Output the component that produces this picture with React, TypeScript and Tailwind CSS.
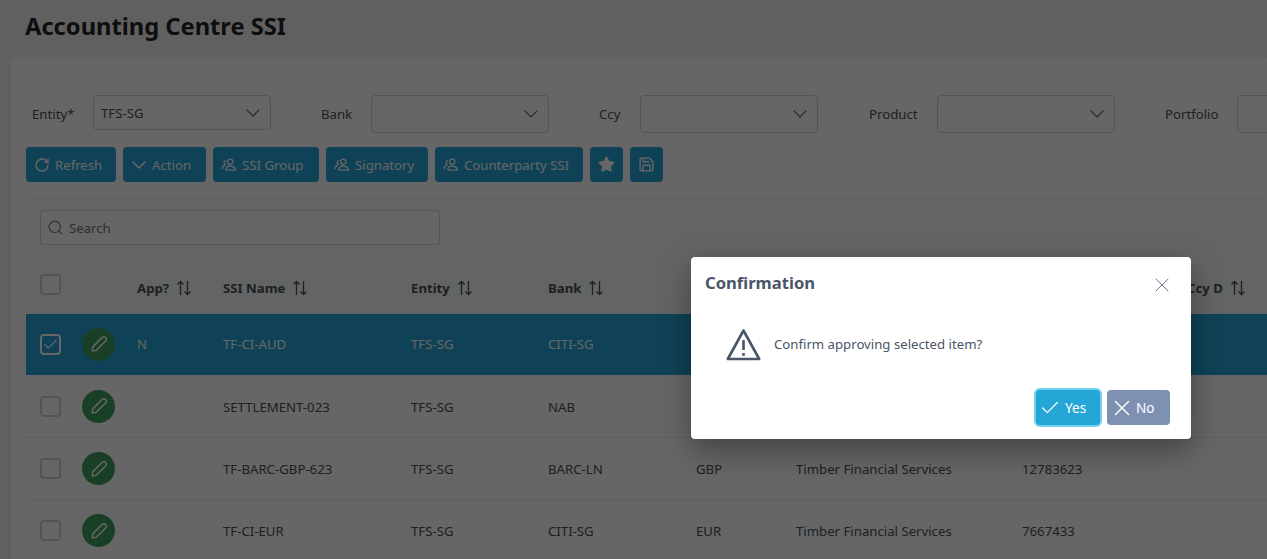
import { Check, ChevronDown, RotateCw, Save, Search, Star, X } from 'lucide-react'

const grid = 'grid grid-cols-[56px_55px_86px_188px_137px_148px_100px_226px_165px_1fr] items-center'

const rows = [
  { app: 'N', name: 'TF-CI-AUD', bank: 'CITI-SG', ccy: 'AUD', account: '8823410', selected: true, height: 'h-[61px]' },
  { app: '', name: 'SETTLEMENT-023', bank: 'NAB', ccy: 'AUD', account: '5510023', selected: false, height: 'h-[63px]' },
  { app: '', name: 'TF-BARC-GBP-623', bank: 'BARC-LN', ccy: 'GBP', account: '12783623', selected: false, height: 'h-[62px]' },
  { app: '', name: 'TF-CI-EUR', bank: 'CITI-SG', ccy: 'EUR', account: '7667433', selected: false, height: 'h-[62px]' },
]

function SortIcon() {
  return (
    <svg width="16" height="16" viewBox="0 0 16 16" fill="none" stroke="currentColor" strokeWidth="1.3" className="ml-[7px] shrink-0">
      <path d="M4.5 15V1.5M1.5 4.5l3-3 3 3" />
      <path d="M11.5 1v13.5M8.5 11.5l3 3 3-3" />
    </svg>
  )
}

function UsersIcon() {
  return (
    <svg width="16" height="14" viewBox="0 0 16 14" fill="none" stroke="currentColor" strokeWidth="1.3">
      <circle cx="9.2" cy="3.8" r="2.6" />
      <path d="M4.8 12c0-2.6 2-4 4.4-4s4.2 1.2 5.4 3.4c.2.5 0 .8-.4.8H5.2" />
      <path d="M5 6.6A2 2 0 0 1 5.2 2.6" />
      <path d="M1 11.2c0-2 1-3.4 2.8-3.8" />
    </svg>
  )
}

function PencilIcon() {
  return (
    <svg width="18" height="18" viewBox="0 0 16 16" fill="none" stroke="currentColor" strokeWidth="1.3" strokeLinejoin="round">
      <path d="M10.9 2a2.3 2.3 0 0 1 3.2 3.2L6 13.2a1.5 1.5 0 0 1-.9.5L2 14.1l.4-3.1a1.5 1.5 0 0 1 .5-.9z" />
    </svg>
  )
}

function Select({ value }: { value?: string }) {
  return (
    <div className={`w-[178px] flex items-center justify-between pl-[7px] pr-[5px] bg-white border border-[#ced4da] rounded-[4px] text-[13.2px] text-[#495057] shrink-0 ${value ? 'h-[35px]' : 'h-[38px]'}`}>
      <span>{value}</span>
      <ChevronDown size={24} strokeWidth={1.25} className="text-[#6c757d]" />
    </div>
  )
}

function ToolButton({ icon, label, width }: { icon: React.ReactNode; label?: string; width: string }) {
  return (
    <button className={`${width} h-[35px] flex items-center gap-[5px] bg-[#26a6d6] text-white text-[13.2px] rounded-[4px] shrink-0 ${label ? 'pl-[8px]' : 'justify-center'}`}>
      {icon}
      {label && <span className="pt-[2px]">{label}</span>}
    </button>
  )
}

export default function App() {
  return (
    <div className="relative w-[1267px] h-[559px] overflow-hidden bg-[#f0f1f1] font-['Noto_Sans','Open_Sans',sans-serif]">
      <h1 className="h-[57px] pl-[25px] pt-[8px] text-[23.7px] leading-[36px] font-bold text-[#212529]">Accounting Centre SSI</h1>

      <div className="ml-[11px] h-[502px] bg-white rounded-t-[4px] pl-[15px] pt-[38px]">
        {/* Filters */}
        <div className="flex items-start h-[38px] text-[13.2px] leading-[38px] text-[#495057] whitespace-nowrap">
          <label className="w-[67px] pl-[6px] shrink-0">Entity*</label>
          <Select value="TFS-SG" />
          <label className="w-[100px] pl-[50px] shrink-0">Bank</label>
          <Select />
          <label className="w-[91px] pl-[50px] shrink-0">Ccy</label>
          <Select />
          <label className="w-[119px] pl-[51px] shrink-0">Product</label>
          <Select />
          <label className="w-[122px] pl-[50px] shrink-0">Portfolio</label>
          <Select />
        </div>

        {/* Toolbar */}
        <div className="flex gap-[7px] mt-[14px]">
          <ToolButton width="w-[90px]" label="Refresh" icon={<RotateCw size={16} strokeWidth={2} />} />
          <ToolButton width="w-[83px]" label="Action" icon={<ChevronDown size={24} strokeWidth={1.6} className="-mx-[4px]" />} />
          <ToolButton width="w-[106px]" label="SSI Group" icon={<UsersIcon />} />
          <ToolButton width="w-[102px]" label="Signatory" icon={<UsersIcon />} />
          <ToolButton width="w-[148px]" label="Counterparty SSI" icon={<UsersIcon />} />
          <ToolButton width="w-[33px]" icon={<Star size={17} fill="currentColor" />} />
          <ToolButton width="w-[33px]" icon={<Save size={17} strokeWidth={2} />} />
        </div>

        {/* Table */}
        <div className="mt-[14px] bg-[#f8f9fa] rounded-t-[4px]">
          <div className="pt-[14px] pl-[14px]">
            <div className="w-[400px] h-[35px] flex items-center gap-[5px] pl-[6px] bg-white border border-[#ced4da] rounded-[4px] text-[13.2px] text-[#6c757d]">
              <Search size={17} strokeWidth={1.5} />
              <span className="pt-[2px]">Search</span>
            </div>
          </div>

          <div className={`${grid} h-[52px] mt-[17px] text-[13.2px] font-bold text-[#495057] whitespace-nowrap`}>
            <div className="pl-[14px] pb-[7px]">
              <div className="w-[21px] h-[21px] bg-white border-2 border-[#ced4da] rounded-[4px]" />
            </div>
            <div />
            <div className="flex items-center pt-px">App?<SortIcon /></div>
            <div className="flex items-center pt-px">SSI Name<SortIcon /></div>
            <div className="flex items-center pt-px">Entity<SortIcon /></div>
            <div className="flex items-center pt-px">Bank<SortIcon /></div>
            <div className="flex items-center pt-px">Ccy<SortIcon /></div>
            <div className="flex items-center pt-px">Counterparty<SortIcon /></div>
            <div className="flex items-center pt-px">Account<SortIcon /></div>
            <div className="flex items-center pt-px">Ccy D<SortIcon /></div>
          </div>
        </div>

        {rows.map((row) => {
          const cell = row.selected ? 'pt-px' : 'pt-[3px]'
          return (
            <div
              key={row.name}
              className={`${grid} ${row.height} border-b text-[13.2px] whitespace-nowrap ${
                row.selected ? 'bg-[#26a6d6] text-white border-[#26a6d6]' : 'bg-white text-[#495057] border-[#e9ecef]'
              }`}
            >
              <div className="pl-[14px]">
                {row.selected ? (
                  <div className="w-[21px] h-[21px] flex items-center justify-center border-2 border-white rounded-[4px]">
                    <Check size={17} strokeWidth={1.6} />
                  </div>
                ) : (
                  <div className="w-[21px] h-[21px] bg-white border-2 border-[#ced4da] rounded-[4px]" />
                )}
              </div>
              <div>
                <div className="w-[33px] h-[33px] rounded-full bg-[#3f9f62] text-white flex items-center justify-center">
                  <PencilIcon />
                </div>
              </div>
              <div className={cell}>{row.app}</div>
              <div className={cell}>{row.name}</div>
              <div className={cell}>TFS-SG</div>
              <div className={cell}>{row.bank}</div>
              <div className={cell}>{row.ccy}</div>
              <div className={cell}>Timber Financial Services</div>
              <div className={cell}>{row.account}</div>
              <div />
            </div>
          )
        })}
      </div>

      {/* Dialog mask */}
      <div className="absolute inset-0 bg-black/60" />

      <div className="absolute left-[691px] top-[257px] w-[500px] h-[182px] bg-white rounded-[4px] shadow-[0_11px_30px_rgba(0,0,0,0.35)] flex flex-col">
        <div className="flex items-center justify-between h-[53px] pl-[14px] pr-[17px]">
          <span className="text-[16.6px] font-bold text-[#4a5568]">Confirmation</span>
          <X size={24} strokeWidth={1} className="text-[#6c7c8d] mt-[2px]" />
        </div>
        <div className="flex items-center gap-[13px] h-[69px] pl-[35px] text-[13.2px] text-[#4a5568]">
          <svg width="35" height="33" viewBox="0 0 35 33" fill="none" stroke="#4a5568" strokeWidth="2.6" strokeLinejoin="round">
            <path d="M17.5 2.5L1.8 31h31.4z" />
            <path d="M17.5 12v10" />
            <path d="M17.5 25v2.8" />
          </svg>
          <span className="pt-px">Confirm approving selected item?</span>
        </div>
        <div className="flex justify-end gap-[7px] pr-[21px] pt-[11px]">
          <button className="w-[64px] h-[35px] flex items-center pl-[3px] gap-[4px] bg-[#26a6d6] text-white text-[13.6px] rounded-[4px] ring-2 ring-[#6fd3ef]">
            <Check size={22} strokeWidth={1.3} />
            <span className="pt-[2px]">Yes</span>
          </button>
          <button className="w-[63px] h-[35px] flex items-center pl-[2px] gap-[1px] bg-[#7e91b2] text-white text-[13.6px] rounded-[4px]">
            <X size={26} strokeWidth={1.3} />
            <span className="pt-[2px]">No</span>
          </button>
        </div>
      </div>
    </div>
  )
}
